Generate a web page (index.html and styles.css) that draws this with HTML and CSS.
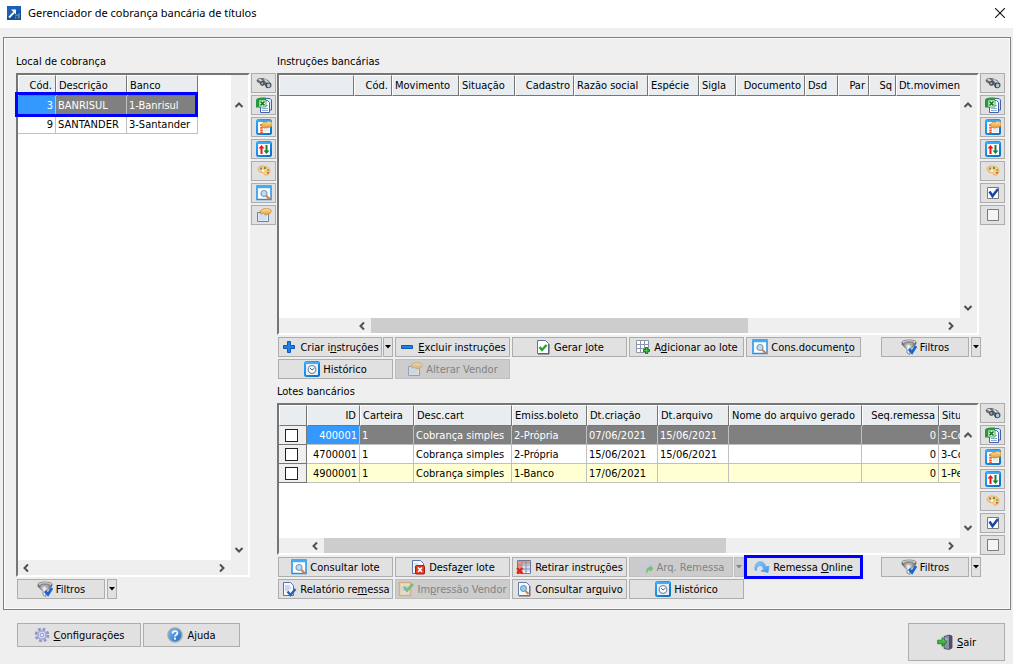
FILE: index.html
```html
<!DOCTYPE html>
<html lang="pt-BR">
<head>
<meta charset="utf-8">
<title>Gerenciador de cobrança bancária de títulos</title>
<link rel="stylesheet" href="styles.css">
</head>
<body>
<svg class="sprite" aria-hidden="true">
  <defs>
    <linearGradient id="g-green" x2="0" y2="1"><stop offset="0" stop-color="#7edb69"/><stop offset="1" stop-color="#138a1e"/></linearGradient>
    <linearGradient id="g-blue" x2="1" y2="1"><stop offset="0" stop-color="#7cc0f8"/><stop offset="1" stop-color="#1667c4"/></linearGradient>
    <linearGradient id="g-sky" x2="1" y2="1"><stop offset="0" stop-color="#8ccbff"/><stop offset="1" stop-color="#3d97ea"/></linearGradient>
    <linearGradient id="g-frame" x2="1" y2="1"><stop offset="0" stop-color="#2aa6ff"/><stop offset="1" stop-color="#0a6fc0"/></linearGradient>
    <linearGradient id="g-steel" x2="1" y2="0"><stop offset="0" stop-color="#555"/><stop offset=".45" stop-color="#f4f4f4"/><stop offset="1" stop-color="#555"/></linearGradient>
    <linearGradient id="g-gold" x2="0" y2="1"><stop offset="0" stop-color="#ffe3a0"/><stop offset="1" stop-color="#e09a35"/></linearGradient>
  </defs>
  <symbol id="binoculars" viewBox="0 0 16 16">
    <path d="M.5 5 3 3h4l5 2 3.500 4v2.500L13 13h-2.500L8.500 10 6 10.500 4.500 9 1 7z" fill="#6b6f73"/>
    <path d="M2 4.500 4 3.500l3 2.500-1.500 1.200zM7.500 4.500 9.500 4.200l4 3.300-2 1z" fill="#d4d7da"/>
    <ellipse cx="6.300" cy="8.200" rx="2.200" ry="2.500" fill="#3f444a"/><ellipse cx="12.300" cy="10.300" rx="2.700" ry="2.900" fill="#3f444a"/>
    <ellipse cx="6.300" cy="8.300" rx="1.100" ry="1.400" fill="#8fa9bb"/><ellipse cx="12.600" cy="10.500" rx="1.700" ry="1.900" fill="#a6c8e0"/>
  </symbol>
  <symbol id="excel" viewBox="0 0 16 16">
    <path d="M6.500 1.500H14l1.500 1.500v10h-9z" fill="#dbe8f9" stroke="#3f63a3"/>
    <path d="M4.500 3.500h7l2 2v10h-9z" fill="#fff" stroke="#3f63a3"/>
    <path d="M6 11.500h6M6 13.500h6M10 8.500h2" stroke="#8aa9da"/>
    <path d="M0 3.500C0 1 3 .5 10 .5V4H4v6.500H0z" fill="#249a3a"/><path d="M3 3h7v7H3z" fill="#eef8ec" stroke="#2d9b3f" stroke-width=".8"/>
    <path d="m4.500 4.500 4 4m0-4-4 4" stroke="#16752a" stroke-width="1.700"/>
  </symbol>
  <symbol id="columns" viewBox="0 0 16 16">
    <rect x="1" y="1" width="14" height="14" rx="1.500" fill="#fff" stroke="url(#g-frame)" stroke-width="2"/>
    <path d="M1 2h14" stroke="#38a7f4" stroke-width="2"/>
    <path d="M5.500 5v9" stroke="#f0532b" stroke-width="2.500" stroke-dasharray="2 .7"/>
    <path d="M8 8h5v5H8z" fill="#e6ecf7"/>
    <path d="m5 5.500 3-2.500 2 .5 2-1.500 4 1v4.500l-4 1-4 .5-1.500-1.500z" fill="url(#g-gold)" stroke="#c58023" stroke-width=".7"/>
  </symbol>
  <symbol id="sort" viewBox="0 0 16 16">
    <rect x="1" y="1" width="14" height="14" rx="1.500" fill="#fff" stroke="url(#g-frame)" stroke-width="2"/>
    <path d="M1 2h14" stroke="#3eaafa" stroke-width="2"/>
    <path d="m5.500 4-3 3.500H4.500V13h2V7.500h2z" fill="#ee1515"/><path d="m10.500 13-3-3.500H9.500V4h2v5.500h2z" fill="#108336"/>
  </symbol>
  <symbol id="palette" viewBox="0 0 16 16">
    <path d="M2 6c0-2.500 3-3.500 6-3 4 .3 6 2 6 5 0 2.500-2 5-5 4-1-.4-.5-1.600-1.500-2C6 9.500 2 9.500 2 6z" fill="#f5cf80" stroke="#dda952" stroke-width=".7"/>
    <path d="M4 4.500h2v2H4z" fill="#8d75b5"/><path d="M8 4h2v2H8z" fill="#4e9b68"/><path d="M11 6h2v2h-2z" fill="#8cb851"/><path d="M11 9h2v1.500h-2z" fill="#e44"/><circle cx="7" cy="7.800" r="1" fill="#fff"/>
  </symbol>
  <symbol id="search-window" viewBox="0 0 16 16">
    <rect x="1" y="1" width="14" height="13.500" fill="#fff" stroke="#1b93ee" stroke-width="1.500"/>
    <path d="M1 2h14" stroke="#42acf7" stroke-width="2.500"/>
    <circle cx="8" cy="8.500" r="3" fill="#b5e0fa" stroke="#8b9bab" stroke-width="1.200"/>
    <path d="m10.500 11 3.500 3.500" stroke="#df7936" stroke-width="2.200"/>
  </symbol>
  <symbol id="hand-page" viewBox="0 0 16 16">
    <path d="M1.500 5.500h11v9h-11z" fill="#dfe8f6" stroke="#6c82ab"/><path d="M3 8h7M3 10h7M3 12h7" stroke="#c5d2e7"/>
    <path d="m4 4 4-2.500 6 .5 1.500 2-2 3-4 1-2-1.500-3 .5z" fill="url(#g-gold)" stroke="#c08c38" stroke-width=".7"/>
  </symbol>
  <symbol id="plus" viewBox="0 0 16 16"><path d="M6.500 2.500h3v4h4v3h-4v4h-3v-4h-4v-3h4z" fill="#2181e9" stroke="#0d59b7"/></symbol>
  <symbol id="minus" viewBox="0 0 16 16"><path d="M2.500 6.500h11v3h-11z" fill="#2181e9" stroke="#0d59b7"/></symbol>
  <symbol id="page-check" viewBox="0 0 16 16">
    <path d="M2.500 1.500h8l3 3v10h-11z" fill="#fff" stroke="#5d7396"/><path d="M14 5v10H3" fill="none" stroke="#4c5869"/>
    <path d="m4.500 8 2.500 3 4.500-5" fill="none" stroke="#24a42b" stroke-width="2.400"/>
  </symbol>
  <symbol id="grid-add" viewBox="0 0 16 16">
    <path d="M1.500 1.500h12v12h-12zM5.500 1.500v12M9.500 1.500v12M1.500 5.500h12M1.500 9.500h12" fill="#fff" stroke="#8e97ae"/>
    <path d="M10.500 8.500h2v2h2v2h-2v2h-2v-2h-2v-2h2z" fill="#3bcb35" stroke="#0d7d16"/>
  </symbol>
  <symbol id="funnel" viewBox="0 0 16 16">
    <path d="M1 3v2.500l5 5V14l3 1.500v-5L15 5V3z" fill="url(#g-steel)" stroke="#5a5a5a" stroke-width=".6"/>
    <ellipse cx="8" cy="3" rx="7" ry="2" fill="#e8e8e8" stroke="#777" stroke-width=".8"/><ellipse cx="8" cy="3.200" rx="5" ry="1" fill="#8a8a8a"/>
    <path d="m8 10 3 3.500L15 7" fill="none" stroke="#1766cf" stroke-width="2.700"/>
  </symbol>
  <symbol id="clock" viewBox="0 0 16 16">
    <rect x="1" y="1" width="14" height="14" rx="1.500" fill="#e9eef8" stroke="url(#g-frame)" stroke-width="2"/><path d="M1 2h14" stroke="#42acf7" stroke-width="2"/>
    <circle cx="8" cy="8.500" r="3.800" fill="#fff" stroke="#7e96ab" stroke-width="1.300"/><path d="m6 7 2 2 2.500-2" fill="none" stroke="#4f6377"/>
  </symbol>
  <symbol id="page-cross" viewBox="0 0 16 16">
    <path d="M2.500 1.500h8l3 3v10h-11z" fill="#f4f7fd" stroke="#6077ad"/><path d="M4 5h4M4 8h3" stroke="#bccae4"/>
    <rect x="5.500" y="6.500" width="9" height="8.500" rx="1" fill="#de3b25" stroke="#a51e12"/><path d="m8 8.500 4 4.500m0-4.500-4 4.500" stroke="#fff" stroke-width="1.600"/>
  </symbol>
  <symbol id="grid-cross" viewBox="0 0 16 16">
    <path d="M1.500 1.500h13v13h-13z" fill="#fff" stroke="#6b789d"/><path d="M2 2h4v12H2zM6 2h8v3H6z" fill="#f0917b"/><path d="M7 6h7v7H7z" fill="#d3def5"/>
    <path d="M6 2v12M10 2v12M2 6h12M2 10h12" stroke="#8b91ad"/><path d="m1 9 5.500 5.500m0-5.500L1 14.500" stroke="#dd2811" stroke-width="2.300"/>
  </symbol>
  <symbol id="page-export" viewBox="0 0 16 16">
    <path d="M2.500 1.500h7l3 3v10h-10z" fill="#f6f9ff" stroke="#5872a9"/><path d="M4 5h5M4 7h6M4 9h4" stroke="#9fb3da"/>
    <path d="m6.500 10.500 3 3.500 5-6" fill="none" stroke="#2464c0" stroke-width="2.400"/>
  </symbol>
  <symbol id="form-check" viewBox="0 0 16 16">
    <path d="M1.500 1.500h11v13h-11z" fill="#ffe7bb" stroke="#dc9e55" stroke-width="1.500"/><path d="M3 4h8v9H3z" fill="#e0eaf8"/><path d="M4 6h6M4 9h5" stroke="#9eb4d3"/>
    <path d="m6 6 3 3.500L15 3" fill="none" stroke="#42b444" stroke-width="2.600"/>
  </symbol>
  <symbol id="page-search" viewBox="0 0 16 16">
    <path d="M2.500 1.500h8l3 3v10h-11z" fill="#f4f8fe" stroke="#667ca9"/><path d="M14 5v10H3" fill="none" stroke="#6c6c76"/>
    <circle cx="7.500" cy="7.500" r="3" fill="#8ed0f5" stroke="#6089a8"/><path d="m9.500 10 3 3" stroke="#df7a33" stroke-width="2"/>
  </symbol>
  <symbol id="gears" viewBox="0 0 16 16">
    <circle cx="5" cy="8.500" r="3.400" fill="none" stroke="#c3c8e6" stroke-width="3" stroke-dasharray="2 .67"/><circle cx="11.500" cy="3.500" r="2.200" fill="none" stroke="#c3c8e6" stroke-width="2.200" stroke-dasharray="1.400 .57"/>
    <path d="M9 15c-2-4 0-7 3-7V6l3.500 3.500L12 13v-2c-1.500 0-2.500 1-3 4z" fill="#3fb54a"/>
  </symbol>
  <symbol id="redo" viewBox="0 0 16 16"><path d="M1 11C.5 5 4 2 7.500 3c3 .8 4 3 4.300 5l3.200-.8-1 6.300-7-1.500 2.600-1.800C9 7.500 7.500 6 5.500 6.500 3.500 7 2.500 8.500 2.500 11.500z" fill="url(#g-sky)" stroke="#4da2e9" stroke-width=".7"/></symbol>
  <symbol id="gear" viewBox="0 0 16 16">
    <circle cx="8" cy="8" r="6" fill="none" stroke="#8b92c8" stroke-width="2.600" stroke-dasharray="2.700 2.010"/>
    <circle cx="8" cy="8" r="4.200" fill="#dfe2f7" stroke="#a8aedb" stroke-width="2"/><circle cx="8" cy="8" r="1.900" fill="#e8e8ee" stroke="#8f96c9"/>
  </symbol>
  <symbol id="help" viewBox="0 0 16 16">
    <circle cx="8" cy="8" r="7" fill="url(#g-blue)" stroke="#a0a6ad" stroke-width="1.500"/>
    <path d="M5.500 6.500C5.500 3.500 10.500 3.500 10.500 6c0 2-2.500 1.700-2.500 3.500" fill="none" stroke="#fff" stroke-width="1.700"/><circle cx="8" cy="11.700" r="1.100" fill="#fff"/>
  </symbol>
  <symbol id="exit" viewBox="0 0 16 16">
    <path d="M7 2.500 12 1l3 1v12l-3 1.500-5-1z" fill="#8b90aa" stroke="#42465d" stroke-width=".8"/><path d="M12 1v14l3-1V2z" fill="#4b4f67"/><path d="M8.500 5h2M8.500 8h2" stroke="#c8cce0"/>
    <path d="M.7 6.200H5V3.500L10 8l-5 4.500V9.800H.7z" fill="url(#g-green)" stroke="#157a20" stroke-width=".8"/>
  </symbol>
  <symbol id="tick-on" viewBox="0 0 16 16"><path d="M2.500 2.500h11v11h-11z" fill="#fff" stroke="#7b7b7b"/><path d="m4.500 6.500 3 4.500L13 4" fill="none" stroke="#1248ad" stroke-width="2.500"/></symbol>
  <symbol id="tick-off" viewBox="0 0 16 16"><path d="M2.500 2.500h11v11h-11z" fill="#f4f4f4" stroke="#7b7b7b"/></symbol>
  <symbol id="chev" viewBox="0 0 10 10"><path d="m1.500 7 3.500-3.500L8.500 7" fill="none" stroke="#505050" stroke-width="2"/></symbol>
  <symbol id="caret" viewBox="0 0 6 4"><path d="M0 0h6L3 3.500z" fill="currentColor"/></symbol>
</svg>

<header class="titlebar">
  <svg class="app-icon" viewBox="0 0 14 14" aria-hidden="true"><path d="M0 0h14v14H0z" fill="#124f9f"/><path d="M0 0h14v4L0 10z" fill="#1c61b6"/><path d="m2 11.500 5-5" stroke="#fff" stroke-width="1.800"/><path d="M4 3.500h5v5z" fill="#fff"/><path d="M9 13V9h2v4M12 12V7" stroke="#7ba8db"/></svg>
  <h1>Gerenciador de cobrança bancária de títulos</h1>
  <button class="close" type="button" aria-label="Fechar"><svg viewBox="0 0 10 10"><path d="m0 0 10 10M10 0 0 10" stroke="#111" stroke-width="1.100"/></svg></button>
</header>

<main class="panel">
  <section class="places">
    <h2>Local de cobrança</h2>
    <div class="grid-area">
      <div class="grid">
        <div class="view">
          <table class="t-places">
            <colgroup><col class="w38"><col class="w71"><col class="w71"></colgroup>
            <thead><tr><th class="num">Cód.</th><th>Descrição</th><th>Banco</th></tr></thead>
            <tbody>
              <tr class="selected"><td class="num current">3</td><td>BANRISUL</td><td>1-Banrisul</td></tr>
              <tr><td class="num">9</td><td>SANTANDER</td><td>3-Santander</td></tr>
            </tbody>
          </table>
        </div>
        <div class="vbar"><button type="button" aria-label="Subir"><svg><use href="#chev"/></svg></button><button type="button" class="down" aria-label="Descer"><svg><use href="#chev"/></svg></button></div>
        <div class="hbar"><button type="button" class="left" aria-label="Esquerda"><svg><use href="#chev"/></svg></button><span class="track"></span><button type="button" class="right" aria-label="Direita"><svg><use href="#chev"/></svg></button></div>
        <div class="row-mark"></div>
      </div>
      <div class="side">
        <button type="button" aria-label="Localizar"><svg><use href="#binoculars"/></svg></button>
        <button type="button" aria-label="Excel"><svg><use href="#excel"/></svg></button>
        <button type="button" aria-label="Colunas"><svg><use href="#columns"/></svg></button>
        <button type="button" aria-label="Ordenar"><svg><use href="#sort"/></svg></button>
        <button type="button" aria-label="Cores"><svg><use href="#palette"/></svg></button>
        <button type="button" aria-label="Consultar"><svg><use href="#search-window"/></svg></button>
        <button type="button" aria-label="Propriedades"><svg><use href="#hand-page"/></svg></button>
      </div>
    </div>
    <div class="filter">
      <button class="btn" type="button"><svg><use href="#funnel"/></svg><span>Filtros</span></button>
      <button class="btn drop" type="button" aria-label="Mais filtros"><svg><use href="#caret"/></svg></button>
    </div>
  </section>

  <section class="work">
    <h2>Instruções bancárias</h2>
    <div class="grid-area tall">
      <div class="grid">
        <div class="view">
          <table class="t-instr">
            <colgroup><col class="w75"><col class="w38"><col class="w67"><col class="w56"><col class="w59"><col class="w74"><col class="w51"><col class="w37"><col class="w69"><col class="w33"><col class="w31"><col class="w27"><col class="w100"></colgroup>
            <thead><tr><th></th><th class="num">Cód.</th><th>Movimento</th><th>Situação</th><th class="num">Cadastro</th><th>Razão social</th><th>Espécie</th><th>Sigla</th><th class="num">Documento</th><th>Dsd</th><th class="num">Par</th><th class="num">Sq</th><th>Dt.movimento</th></tr></thead>
          </table>
        </div>
        <div class="vbar"><button type="button" aria-label="Subir"><svg><use href="#chev"/></svg></button><button type="button" class="down" aria-label="Descer"><svg><use href="#chev"/></svg></button></div>
        <div class="hbar fixed75"><button type="button" class="left" aria-label="Esquerda"><svg><use href="#chev"/></svg></button><span class="track"><span class="thumb" style="width:66%"></span></span><button type="button" class="right" aria-label="Direita"><svg><use href="#chev"/></svg></button></div>
      </div>
      <div class="side">
        <button type="button" aria-label="Localizar"><svg><use href="#binoculars"/></svg></button>
        <button type="button" aria-label="Excel"><svg><use href="#excel"/></svg></button>
        <button type="button" aria-label="Colunas"><svg><use href="#columns"/></svg></button>
        <button type="button" aria-label="Ordenar"><svg><use href="#sort"/></svg></button>
        <button type="button" aria-label="Cores"><svg><use href="#palette"/></svg></button>
        <button type="button" aria-label="Marcar todos"><svg><use href="#tick-on"/></svg></button>
        <button type="button" aria-label="Desmarcar todos"><svg><use href="#tick-off"/></svg></button>
      </div>
    </div>
    <div class="actions">
      <div class="action-grid">
        <div class="split"><button class="btn" type="button"><svg><use href="#plus"/></svg><span>Criar i<u>n</u>struções</span></button><button class="btn drop" type="button" aria-label="Mais opções"><svg><use href="#caret"/></svg></button></div>
        <button class="btn" type="button"><svg><use href="#minus"/></svg><span><u>E</u>xcluir instruções</span></button>
        <button class="btn" type="button"><svg><use href="#page-check"/></svg><span>Gerar <u>l</u>ote</span></button>
        <button class="btn" type="button"><svg><use href="#grid-add"/></svg><span>A<u>d</u>icionar ao lote</span></button>
        <button class="btn" type="button"><svg><use href="#search-window"/></svg><span>Cons.documen<u>t</u>o</span></button>
        <button class="btn" type="button"><svg><use href="#clock"/></svg><span>Histórico</span></button>
        <button class="btn" type="button" disabled><svg><use href="#hand-page"/></svg><span>Alterar Vendor</span></button>
      </div>
      <div class="filter">
        <button class="btn" type="button"><svg><use href="#funnel"/></svg><span>Filtros</span></button>
        <button class="btn drop" type="button" aria-label="Mais filtros"><svg><use href="#caret"/></svg></button>
      </div>
    </div>

    <h2 class="second">Lotes bancários</h2>
    <div class="grid-area short">
      <div class="grid">
        <div class="view">
          <table class="t-lots">
            <colgroup><col class="w28"><col class="w53"><col class="w54"><col class="w98"><col class="w75"><col class="w71"><col class="w71"><col class="w133"><col class="w77"><col class="w100"></colgroup>
            <thead><tr><th></th><th class="num">ID</th><th>Carteira</th><th>Desc.cart</th><th>Emiss.boleto</th><th>Dt.criação</th><th>Dt.arquivo</th><th>Nome do arquivo gerado</th><th class="num">Seq.remessa</th><th>Situação</th></tr></thead>
            <tbody>
              <tr class="selected"><td class="pick"><input type="checkbox" aria-label="Lote 400001"></td><td class="num current">400001</td><td>1</td><td>Cobrança simples</td><td>2-Própria</td><td>07/06/2021</td><td>15/06/2021</td><td></td><td class="num">0</td><td>3-Confirmado</td></tr>
              <tr><td class="pick"><input type="checkbox" aria-label="Lote 4700001"></td><td class="num">4700001</td><td>1</td><td>Cobrança simples</td><td>2-Própria</td><td>15/06/2021</td><td>15/06/2021</td><td></td><td class="num">0</td><td>3-Confirmado</td></tr>
              <tr class="pending"><td class="pick"><input type="checkbox" aria-label="Lote 4900001"></td><td class="num">4900001</td><td>1</td><td>Cobrança simples</td><td>1-Banco</td><td>17/06/2021</td><td></td><td></td><td class="num">0</td><td>1-Pendente</td></tr>
            </tbody>
          </table>
        </div>
        <div class="vbar"><button type="button" aria-label="Subir"><svg><use href="#chev"/></svg></button><button type="button" class="down" aria-label="Descer"><svg><use href="#chev"/></svg></button></div>
        <div class="hbar fixed28"><button type="button" class="left" aria-label="Esquerda"><svg><use href="#chev"/></svg></button><span class="track"><span class="thumb" style="width:65%"></span></span><button type="button" class="right" aria-label="Direita"><svg><use href="#chev"/></svg></button></div>
      </div>
      <div class="side">
        <button type="button" aria-label="Localizar"><svg><use href="#binoculars"/></svg></button>
        <button type="button" aria-label="Excel"><svg><use href="#excel"/></svg></button>
        <button type="button" aria-label="Colunas"><svg><use href="#columns"/></svg></button>
        <button type="button" aria-label="Ordenar"><svg><use href="#sort"/></svg></button>
        <button type="button" aria-label="Cores"><svg><use href="#palette"/></svg></button>
        <button type="button" aria-label="Marcar todos"><svg><use href="#tick-on"/></svg></button>
        <button type="button" aria-label="Desmarcar todos"><svg><use href="#tick-off"/></svg></button>
      </div>
    </div>
    <div class="actions">
      <div class="action-grid">
        <button class="btn" type="button"><svg><use href="#search-window"/></svg><span>Consultar lote</span></button>
        <button class="btn" type="button"><svg><use href="#page-cross"/></svg><span>Desfa<u>z</u>er lote</span></button>
        <button class="btn" type="button"><svg><use href="#grid-cross"/></svg><span>Retirar instru<u>ç</u>ões</span></button>
        <div class="split"><button class="btn" type="button" disabled><svg><use href="#gears"/></svg><span>Arq. Remessa</span></button><button class="btn drop" type="button" aria-label="Mais opções" disabled><svg><use href="#caret"/></svg></button></div>
        <button class="btn marked" type="button"><svg><use href="#redo"/></svg><span>Remessa <u>O</u>nline</span></button>
        <button class="btn" type="button"><svg><use href="#page-export"/></svg><span>Relatório re<u>m</u>essa</span></button>
        <button class="btn" type="button" disabled><svg><use href="#form-check"/></svg><span>Im<u>p</u>ressão Vendor</span></button>
        <button class="btn" type="button"><svg><use href="#page-search"/></svg><span>Consultar ar<u>q</u>uivo</span></button>
        <button class="btn" type="button"><svg><use href="#clock"/></svg><span>Histórico</span></button>
      </div>
      <div class="filter">
        <button class="btn" type="button"><svg><use href="#funnel"/></svg><span>Filtros</span></button>
        <button class="btn drop" type="button" aria-label="Mais filtros"><svg><use href="#caret"/></svg></button>
      </div>
    </div>
  </section>
</main>

<footer class="footer">
  <button class="btn config" type="button"><svg><use href="#gear"/></svg><span><u>C</u>onfigurações</span></button>
  <button class="btn help" type="button"><svg><use href="#help"/></svg><span>A<u>j</u>uda</span></button>
  <button class="btn exit" type="button"><svg><use href="#exit"/></svg><span><u>S</u>air</span></button>
</footer>
</body>
</html>
```
FILE: styles.css
```css
* { box-sizing: border-box; }

body {
  margin: 0;
  min-height: 100vh;
  display: flex;
  flex-direction: column;
  background: #efefef;
  color: #000;
  font: 11px/16px "DejaVu Sans Condensed", "Noto Sans", sans-serif;
}

button { font: inherit; color: inherit; padding: 0; margin: 0; }
svg { display: block; flex: none; }
.sprite { position: absolute; width: 0; height: 0; }
u { text-underline-offset: 1px; }

/* Title bar */
.titlebar {
  display: flex;
  align-items: center;
  height: 28px;
  padding: 0 8px 3px 7px;
  background: #fff;
}
.app-icon { width: 14px; height: 14px; margin-right: 7px; }
.titlebar h1 { margin: 0; font: 400 11px/16px "Noto Sans", sans-serif; }
.close { margin-left: auto; border: 0; background: none; }
.close svg { width: 10px; height: 10px; }

/* Panel */
.panel {
  flex: 1;
  display: flex;
  gap: 1px;
  margin: 9px 2px 0 3px;
  padding: 15px 5px 10px 12px;
  border: 1px solid #808080;
  box-shadow: inset 0 0 0 1px #fafafa;
}
.panel h2 { margin: 0 0 3px; padding-top: 1px; font-size: 11px; line-height: 16px; font-weight: 400; }
.panel h2.second { margin-top: 4px; }
.places { width: 260px; display: flex; flex-direction: column; }
.work { flex: 1; min-width: 0; display: flex; flex-direction: column; }
.places .grid-area { flex: 1; }
.tall { flex: 262 1 0; }
.short { flex: 152 1 0; }

/* Grid frame with its tool strip */
.grid-area { display: flex; gap: 1px; min-height: 0; }
.grid {
  position: relative;
  flex: 1;
  min-width: 0;
  display: grid;
  grid-template: minmax(0, 1fr) 15px / minmax(0, 1fr) 17px;
  border: 2px solid #fff;
  border-top-color: #767676;
  border-left-color: #767676;
  background: #efefef;
}
.view { overflow: hidden; background: #fff; }
.vbar {
  display: flex;
  flex-direction: column;
  justify-content: space-between;
  align-items: center;
  padding: 25px 1px 5px 0;
}
.vbar button, .hbar button { width: 10px; height: 10px; border: 0; background: none; }
.vbar svg, .hbar button svg { width: 10px; height: 10px; }
.down svg { transform: rotate(180deg); }
.left svg { transform: rotate(-90deg); }
.right svg { transform: rotate(90deg); }
.hbar { display: flex; align-items: center; gap: 4px; padding: 0 4px 0 3px; }
.fixed75 { padding-left: 78px; }
.fixed28 { padding-left: 31px; }
.track { flex: 1; height: 15px; display: flex; }
.thumb { background: #cdcdcd; }
.row-mark {
  position: absolute;
  top: 17px;
  left: -3px;
  width: 183px;
  height: 25px;
  border: 3px solid #0000ff;
}

.side { display: flex; flex-direction: column; gap: 2px; width: 25px; }
.side button {
  display: flex;
  align-items: center;
  justify-content: center;
  height: 20px;
  border: 1px solid #adadad;
  background: #e1e1e1;
}
.side svg { width: 16px; height: 16px; }

/* Tables */
table { table-layout: fixed; width: 0; border-collapse: separate; border-spacing: 0; }
th, td { overflow: hidden; white-space: nowrap; text-align: left; font-weight: 400; }
th {
  height: 21px;
  padding: 0 3px 0 2px;
  line-height: 18px;
  background: #e9edf0;
  border: 1px solid #fff;
  border-right-color: #767676;
  border-bottom-color: #767676;
}
td { height: 19px; padding: 2px 2px 0; line-height: 16px; border: 0 solid #c0c0c0; border-width: 0 1px 1px 0; }
th.num, td.num { text-align: right; }
.selected td { background: #808080; color: #fff; }
.selected td.current { background: #3399ff; }
.pending td { background: #ffffd2; }
tr td.pick { padding: 2px 6px; background: #efefef; border-color: #767676; }
.pick input {
  display: block;
  appearance: none;
  width: 13px;
  height: 13px;
  margin: 0;
  border: 1px solid #222;
  background: #fff;
}
.w27 { width: 27px; } .w28 { width: 28px; } .w31 { width: 31px; } .w33 { width: 33px; }
.w37 { width: 37px; } .w38 { width: 38px; } .w51 { width: 51px; } .w53 { width: 53px; }
.w54 { width: 54px; } .w56 { width: 56px; } .w59 { width: 59px; } .w67 { width: 67px; }
.w69 { width: 69px; } .w71 { width: 71px; } .w74 { width: 74px; } .w75 { width: 75px; }
.w77 { width: 77px; } .w98 { width: 98px; } .w100 { width: 100px; } .w133 { width: 133px; }

/* Buttons */
.btn {
  display: flex;
  align-items: center;
  justify-content: center;
  gap: 3px;
  height: 20px;
  border: 1px solid #adadad;
  background: #e1e1e1;
  white-space: nowrap;
}
.btn span { padding-top: 2px; }
.btn svg { width: 16px; height: 16px; }
.btn:disabled { background: #cccccc; border-color: #bfbfbf; color: #838383; }
.btn:disabled svg { opacity: .6; }
.btn.drop { width: 10px; }
.btn.drop svg { width: 6px; height: 4px; opacity: 1; }
.btn.marked { outline: 3px solid #0000ff; outline-offset: -1px; }
.split { display: flex; gap: 1px; }
.split .btn:first-child { flex: 1; }
.actions { display: flex; justify-content: space-between; padding: 2px 24px 0 1px; }
.action-grid { display: grid; grid-template-columns: repeat(5, 115px); gap: 2px; }
.filter { display: flex; gap: 2px; }
.filter .btn:first-child { width: 88px; }
.places .filter { padding: 2px 0 0 1px; }

/* Footer */
.footer { display: flex; gap: 2px; padding: 13px 8px 3px 17px; }
.footer .btn { height: 24px; gap: 4px; }
.footer .config { width: 124px; }
.footer .help { width: 97px; }
.footer .exit { width: 97px; height: 38px; margin-left: auto; }
```
